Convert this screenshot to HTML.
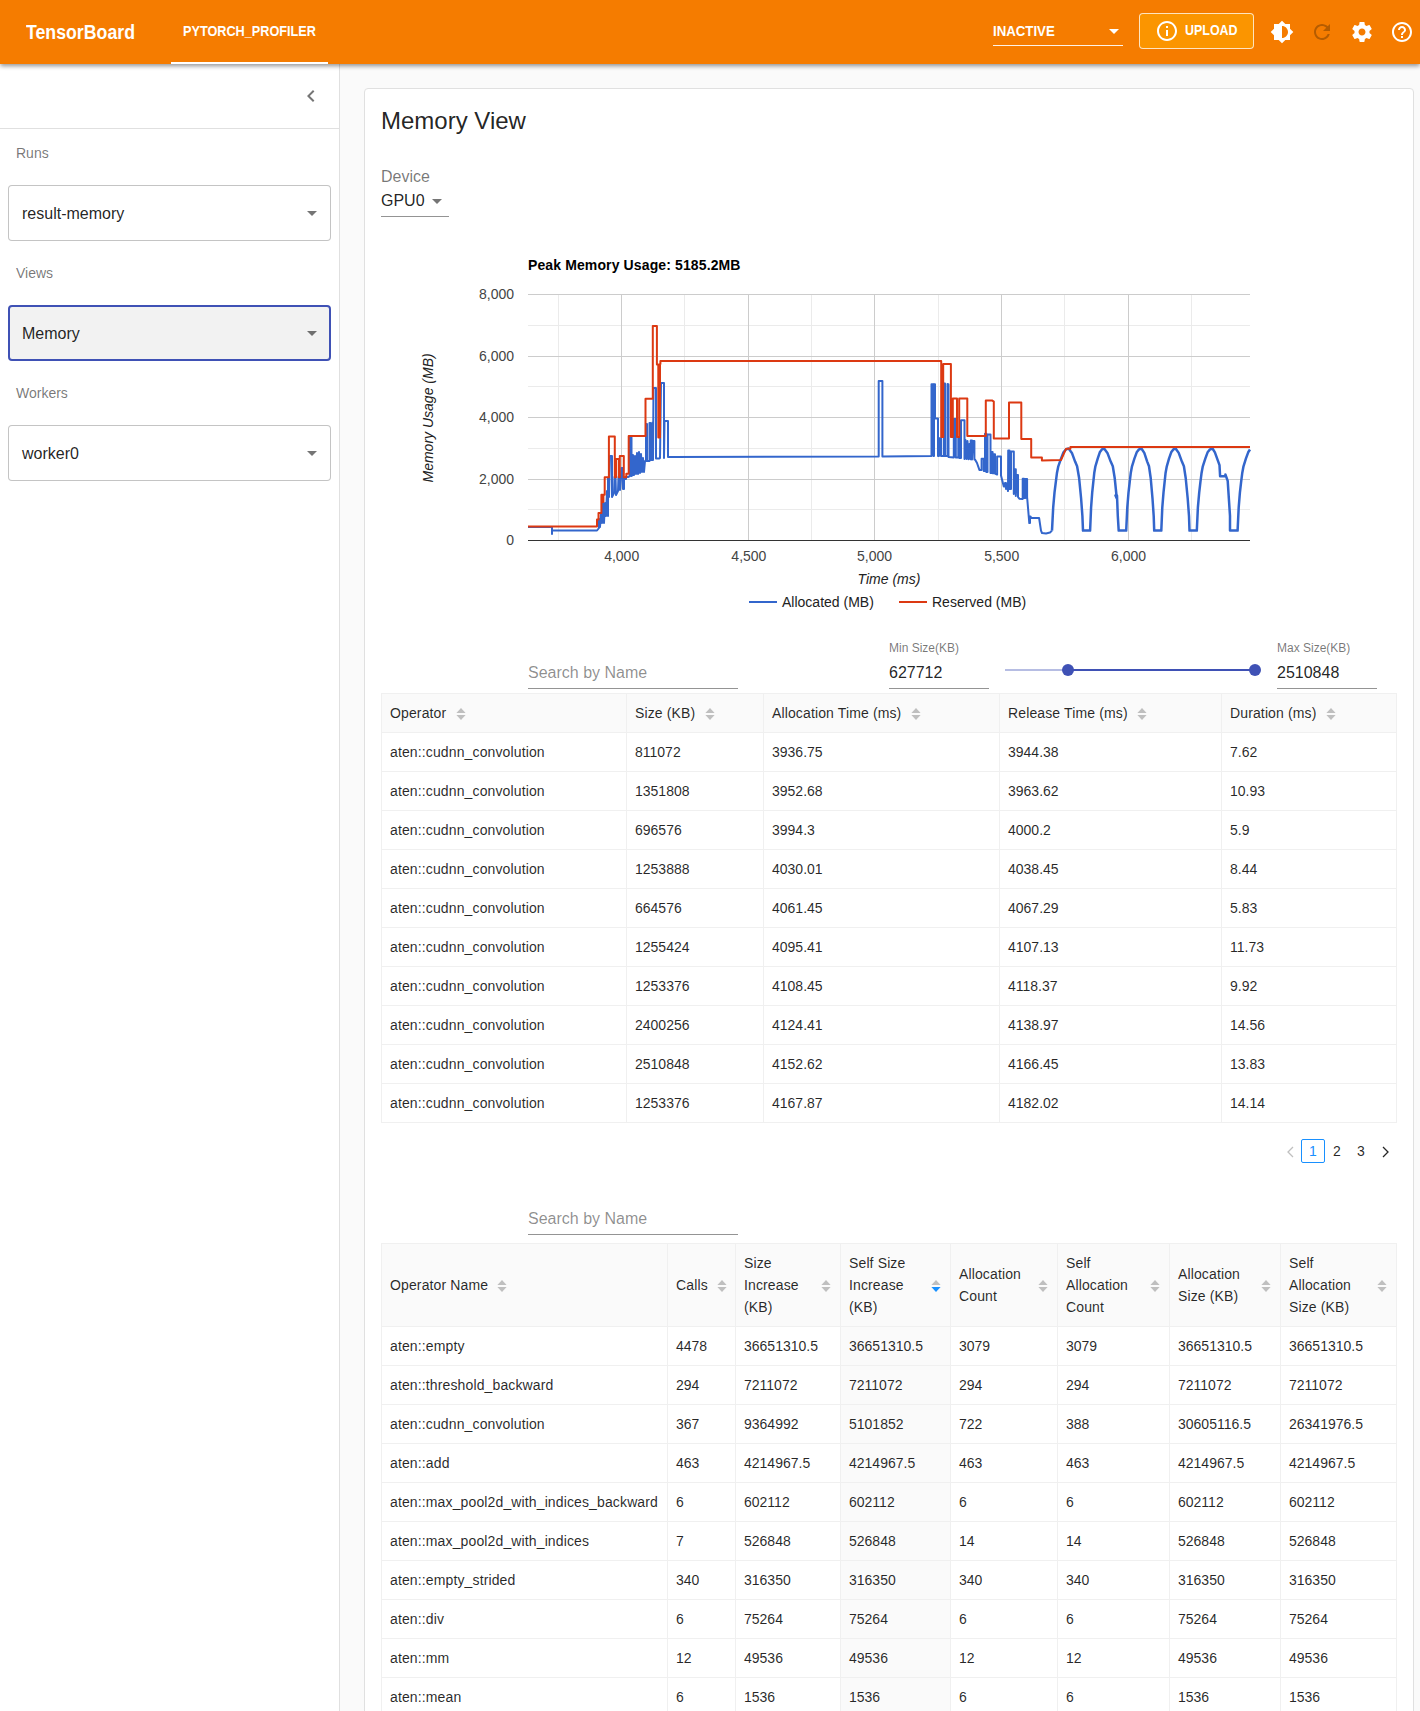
<!DOCTYPE html><html><head><meta charset="utf-8"><style>
*{box-sizing:border-box}
html,body{margin:0;padding:0}
body{width:1420px;height:1711px;overflow:hidden;position:relative;background:#fafafa;font-family:"Liberation Sans",sans-serif}
.t{position:absolute;white-space:nowrap}
.ic{position:absolute;display:block}
.box{position:absolute}
</style></head><body>
<div class="box" style="left:0;top:64px;width:340px;height:1647px;background:#fff;border-right:1px solid #e0e0e0"></div>
<svg class="ic" style="left:299px;top:84px;" width="24" height="24" viewBox="0 0 24 24"><path fill="rgba(0,0,0,.54)" d="M15.41 7.41L14 6l-6 6 6 6 1.41-1.41L10.83 12z"/></svg>
<div class="box" style="left:0;top:128px;width:339px;height:1px;background:#e0e0e0"></div>
<div class="t" style="left:16px;top:144.95px;font-size:14px;line-height:17px;color:rgba(0,0,0,.54);font-weight:normal;">Runs</div>
<div class="box" style="left:8px;top:185px;width:323px;height:56px;border:1px solid rgba(0,0,0,.23);border-radius:4px;background:#fff"></div>
<div class="t" style="left:22px;top:204.36px;font-size:16px;line-height:19px;color:rgba(0,0,0,.87);font-weight:normal;">result-memory</div>
<svg class="ic" style="left:307px;top:211px" width="10" height="5" viewBox="0 0 10 5"><path fill="rgba(0,0,0,.54)" d="M0 0h10L5 5z"/></svg>
<div class="t" style="left:16px;top:264.95px;font-size:14px;line-height:17px;color:rgba(0,0,0,.54);font-weight:normal;">Views</div>
<div class="box" style="left:8px;top:305px;width:323px;height:56px;border:2px solid #3f51b5;border-radius:4px;background:#f2f2f2"></div>
<div class="t" style="left:22px;top:324.36px;font-size:16px;line-height:19px;color:rgba(0,0,0,.87);font-weight:normal;">Memory</div>
<svg class="ic" style="left:307px;top:331px" width="10" height="5" viewBox="0 0 10 5"><path fill="rgba(0,0,0,.54)" d="M0 0h10L5 5z"/></svg>
<div class="t" style="left:16px;top:384.95px;font-size:14px;line-height:17px;color:rgba(0,0,0,.54);font-weight:normal;">Workers</div>
<div class="box" style="left:8px;top:425px;width:323px;height:56px;border:1px solid rgba(0,0,0,.23);border-radius:4px;background:#fff"></div>
<div class="t" style="left:22px;top:444.36px;font-size:16px;line-height:19px;color:rgba(0,0,0,.87);font-weight:normal;">worker0</div>
<svg class="ic" style="left:307px;top:451px" width="10" height="5" viewBox="0 0 10 5"><path fill="rgba(0,0,0,.54)" d="M0 0h10L5 5z"/></svg>
<div class="box" style="left:364px;top:88px;width:1050px;height:1700px;background:#fff;border:1px solid #e0e0e0;border-radius:4px"></div>
<div class="t" style="left:381px;top:105.88px;font-size:24px;line-height:29px;color:rgba(0,0,0,.87);font-weight:normal;">Memory View</div>
<div class="t" style="left:381px;top:166.76px;font-size:16px;line-height:19px;color:rgba(0,0,0,.54);font-weight:normal;">Device</div>
<div class="t" style="left:381px;top:190.76px;font-size:16px;line-height:19px;color:rgba(0,0,0,.87);font-weight:normal;">GPU0</div>
<svg class="ic" style="left:432px;top:199px" width="10" height="5" viewBox="0 0 10 5"><path fill="rgba(0,0,0,.54)" d="M0 0h10L5 5z"/></svg>
<div class="box" style="left:381px;top:216px;width:68px;height:1px;background:rgba(0,0,0,.42)"></div>
<svg class="ic" style="left:0;top:0" width="1420" height="640" viewBox="0 0 1420 640"><rect x="528" y="325" width="722" height="1" fill="#ebebeb"/><rect x="528" y="386" width="722" height="1" fill="#ebebeb"/><rect x="528" y="448" width="722" height="1" fill="#ebebeb"/><rect x="528" y="509" width="722" height="1" fill="#ebebeb"/><rect x="558" y="294" width="1" height="246" fill="#ebebeb"/><rect x="684" y="294" width="1" height="246" fill="#ebebeb"/><rect x="811" y="294" width="1" height="246" fill="#ebebeb"/><rect x="938" y="294" width="1" height="246" fill="#ebebeb"/><rect x="1064" y="294" width="1" height="246" fill="#ebebeb"/><rect x="1191" y="294" width="1" height="246" fill="#ebebeb"/><rect x="528" y="294" width="722" height="1" fill="#cccccc"/><rect x="528" y="356" width="722" height="1" fill="#cccccc"/><rect x="528" y="417" width="722" height="1" fill="#cccccc"/><rect x="528" y="479" width="722" height="1" fill="#cccccc"/><rect x="621" y="294" width="1" height="246" fill="#cccccc"/><rect x="748" y="294" width="1" height="246" fill="#cccccc"/><rect x="874" y="294" width="1" height="246" fill="#cccccc"/><rect x="1001" y="294" width="1" height="246" fill="#cccccc"/><rect x="1128" y="294" width="1" height="246" fill="#cccccc"/><polyline fill="none" stroke="#3366cc" stroke-width="2" stroke-linejoin="round" points="528.0,527.0 552.0,527.0 552.0,534.0 552.0,530.5 597.0,530.5 599.0,528.0 599.0,519.0 600.0,527.0 601.0,513.0 602.0,523.0 603.0,503.0 604.0,523.0 605.0,503.0 606.0,516.0 607.0,491.0 608.0,516.0 608.0,478.0 609.0,478.0 609.0,497.0 610.0,456.0 612.0,456.0 612.0,497.0 614.0,493.0 614.5,477.0 615.5,477.0 616.0,495.0 618.0,491.0 618.5,477.0 619.5,477.0 620.0,490.0 621.5,468.0 622.5,468.0 623.0,489.0 624.0,489.0 624.0,479.0 626.0,479.0 626.0,477.0 628.0,477.0 630.0,476.0 630.0,437.5 631.5,437.5 631.5,476.0 633.0,475.0 633.0,455.0 634.0,475.0 635.0,456.0 636.0,474.0 637.0,453.0 638.0,474.0 639.0,452.0 640.0,473.0 641.0,454.0 642.0,472.0 643.0,458.0 644.0,472.0 645.0,461.0 646.0,461.0 646.0,424.0 647.0,424.0 647.0,461.0 649.5,461.0 649.5,423.0 650.5,423.0 650.5,460.0 652.5,460.0 652.5,422.6 653.0,422.6 653.0,460.0 653.5,388.0 656.0,388.0 656.0,458.5 659.0,458.5 660.0,458.0 661.0,383.0 664.0,383.0 664.0,458.0 664.5,421.0 668.0,421.0 668.0,457.0 670.0,457.0 878.7,456.5 878.7,381.0 882.4,381.0 882.4,456.5 931.5,456.0 931.5,384.3 933.5,384.3 933.5,456.0 934.0,456.0 934.0,384.3 935.0,384.3 935.0,418.5 938.0,418.5 938.0,456.0 939.0,456.0 939.0,438.3 941.0,438.3 941.0,456.0 943.8,456.0 943.8,383.4 945.0,383.4 945.0,456.0 947.5,456.0 947.5,384.0 948.5,384.5 948.5,457.0 953.8,457.5 953.8,419.0 955.8,419.0 955.8,457.5 958.3,457.5 958.3,437.0 959.4,437.0 959.4,458.0 961.0,458.0 961.0,420.2 964.5,420.2 964.5,459.0 965.5,440.0 966.5,459.0 967.5,441.0 968.5,459.3 969.5,444.0 970.5,459.3 970.7,440.5 972.0,440.5 972.0,459.5 973.0,441.0 974.4,441.0 974.4,459.5 975.0,459.5 977.0,463.0 979.4,469.9 981.6,470.0 981.6,458.8 983.8,458.8 983.8,471.0 985.0,471.0 985.0,433.8 986.3,433.8 986.3,472.0 987.5,472.0 987.5,434.5 990.5,434.5 990.5,473.0 991.5,473.0 991.5,452.0 992.6,452.0 992.6,473.2 993.5,473.2 993.5,454.3 995.0,454.3 995.0,473.5 997.1,474.5 997.1,456.5 1001.0,456.5 1001.0,475.4 1003.8,486.5 1005.0,486.5 1005.0,483.0 1006.0,483.0 1006.0,489.0 1007.0,484.0 1008.0,491.0 1008.2,450.4 1009.5,450.4 1009.5,489.0 1011.0,489.0 1011.0,451.5 1013.8,451.5 1013.8,494.0 1014.5,469.3 1015.8,469.3 1015.8,496.0 1017.0,474.9 1018.0,474.9 1018.0,497.0 1019.3,498.7 1022.7,499.0 1022.7,478.7 1024.0,478.7 1024.0,498.0 1025.3,498.0 1025.3,479.0 1027.1,479.0 1027.1,497.0 1029.3,523.1 1030.0,523.1 1030.0,516.5 1030.5,516.5 1031.2,518.0 1039.1,518.0 1041.0,530.6 1042.0,533.0 1046.0,533.4 1050.0,532.5 1052.0,530.6"/><polyline fill="none" stroke="#3366cc" stroke-width="2.5" stroke-linejoin="round" points="1052.0,530.6 1053.2,507.3 1054.5,492.6 1055.8,482.1 1057.0,472.7 1058.3,466.3 1061.0,458.7 1063.5,452.3 1066.0,449.4 1068.6,448.5 1071.9,452.9 1075.1,461.6 1077.1,466.3 1079.1,478.0 1081.1,498.5 1082.4,516.0 1083.0,530.6 1090.1,530.6 1091.1,507.3 1092.2,492.6 1093.3,482.1 1094.3,472.7 1095.4,466.3 1097.7,458.7 1099.8,452.3 1101.9,449.4 1104.1,448.5 1107.4,452.9 1110.7,461.6 1112.8,466.3 1114.7,478.0 1116.8,498.5 1115.5,495.5 1117.0,495.5 1117.8,516.0 1118.7,530.6 1126.2,530.6 1127.3,507.3 1128.5,492.6 1129.7,482.1 1130.8,472.7 1132.0,466.3 1134.4,458.7 1136.7,452.3 1139.0,449.4 1141.4,448.5 1144.3,452.9 1147.2,461.6 1149.0,466.3 1150.7,478.0 1152.5,498.5 1153.7,516.0 1154.2,530.6 1161.3,530.6 1162.3,507.3 1163.5,492.6 1164.6,482.1 1165.6,472.7 1166.8,466.3 1169.0,458.7 1171.2,452.3 1173.3,449.4 1175.6,448.5 1178.7,452.9 1181.9,461.6 1183.9,466.3 1185.7,478.0 1187.7,498.5 1189.0,516.0 1189.5,530.6 1196.8,530.6 1197.9,507.3 1199.2,492.6 1200.4,482.1 1201.6,472.7 1202.8,466.3 1205.3,458.7 1207.6,452.3 1210.0,449.4 1212.5,448.5 1214.9,452.3 1219.5,465.1 1220.1,476.2 1225.4,476.2 1225.4,474.5 1227.7,480.9 1230.0,515.9 1230.0,530.6 1237.6,530.6 1238.7,507.3 1239.9,492.6 1241.1,482.1 1242.3,472.7 1243.5,466.3 1245.9,458.7 1248.2,452.3 1250.0,449.5"/><polyline fill="none" stroke="#dc3912" stroke-width="2" stroke-linejoin="round" points="528.0,526.5 597.0,526.5 597.0,519.5 598.5,519.5 598.5,513.0 601.4,513.0 601.4,494.7 602.4,494.7 602.4,502.0 603.4,502.0 603.4,494.7 604.7,494.7 604.7,477.3 608.9,477.3 608.9,436.6 614.8,436.6 614.8,477.3 616.0,477.3 616.0,458.9 618.8,458.9 618.8,477.3 619.8,477.3 619.8,455.9 623.8,455.9 623.8,477.3 626.3,477.3 626.3,473.8 628.7,473.8 628.7,436.0 645.5,436.0 645.5,398.8 652.8,398.8 652.8,326.0 656.9,326.0 656.9,364.4 658.3,364.4 658.3,437.5 660.0,437.5 660.0,364.0 660.4,364.0 660.4,361.0 941.2,361.0 941.2,437.0 943.2,437.0 943.2,364.0 950.9,364.0 950.9,437.0 952.8,437.0 952.8,398.6 957.0,398.6 957.0,437.0 959.2,437.0 959.2,398.6 967.3,398.6 967.3,436.0 985.8,436.0 985.8,400.4 992.0,400.4 993.8,401.6 993.8,438.6 1009.0,438.6 1009.0,402.4 1021.3,402.4 1021.3,439.0 1031.2,439.0 1031.2,457.5 1041.9,457.5 1041.9,460.6 1061.0,460.0 1066.0,448.8 1070.4,448.8 1070.4,446.9 1250.0,446.9"/><rect x="528" y="540" width="722" height="1" fill="#333333"/><rect x="749" y="601" width="28" height="2" fill="#3366cc"/><rect x="899" y="601" width="28" height="2" fill="#dc3912"/></svg>
<div class="t" style="left:528px;top:256.65px;font-size:14px;line-height:17px;color:#000;font-weight:bold;letter-spacing:0.12px">Peak Memory Usage: 5185.2MB</div>
<div class="t" style="left:414px;top:285.85px;font-size:14px;line-height:17px;color:#444;font-weight:normal;width:100px;text-align:right">8,000</div>
<div class="t" style="left:414px;top:347.65px;font-size:14px;line-height:17px;color:#444;font-weight:normal;width:100px;text-align:right">6,000</div>
<div class="t" style="left:414px;top:409.15px;font-size:14px;line-height:17px;color:#444;font-weight:normal;width:100px;text-align:right">4,000</div>
<div class="t" style="left:414px;top:470.65px;font-size:14px;line-height:17px;color:#444;font-weight:normal;width:100px;text-align:right">2,000</div>
<div class="t" style="left:414px;top:532.15px;font-size:14px;line-height:17px;color:#444;font-weight:normal;width:100px;text-align:right">0</div>
<div class="t" style="left:571.7px;top:548.05px;font-size:14px;line-height:17px;color:#444;font-weight:normal;width:100px;text-align:center">4,000</div>
<div class="t" style="left:698.9px;top:548.05px;font-size:14px;line-height:17px;color:#444;font-weight:normal;width:100px;text-align:center">4,500</div>
<div class="t" style="left:824.6px;top:548.05px;font-size:14px;line-height:17px;color:#444;font-weight:normal;width:100px;text-align:center">5,000</div>
<div class="t" style="left:951.7px;top:548.05px;font-size:14px;line-height:17px;color:#444;font-weight:normal;width:100px;text-align:center">5,500</div>
<div class="t" style="left:1078.5px;top:548.05px;font-size:14px;line-height:17px;color:#444;font-weight:normal;width:100px;text-align:center">6,000</div>
<div class="t" style="left:829px;top:571.05px;font-size:14px;line-height:17px;color:#222;font-weight:normal;width:120px;text-align:center;font-style:italic">Time (ms)</div>
<div class="t" style="left:368.3px;top:414px;width:120px;height:17px;text-align:center;font-size:14px;line-height:17px;color:#222;font-style:italic;transform:rotate(-90deg);transform-origin:60px 8.5px">Memory Usage (MB)</div>
<div class="t" style="left:782px;top:594.15px;font-size:14px;line-height:17px;color:#222;font-weight:normal;">Allocated (MB)</div>
<div class="t" style="left:932px;top:594.15px;font-size:14px;line-height:17px;color:#222;font-weight:normal;">Reserved (MB)</div>
<div class="t" style="left:528px;top:662.96px;font-size:16px;line-height:19px;color:rgba(0,0,0,.45);font-weight:normal;">Search by Name</div>
<div class="box" style="left:528px;top:688px;width:210px;height:1px;background:rgba(0,0,0,.42)"></div>
<div class="t" style="left:889px;top:640.84px;font-size:12px;line-height:14px;color:rgba(0,0,0,.54);font-weight:normal;">Min Size(KB)</div>
<div class="t" style="left:889px;top:662.96px;font-size:16px;line-height:19px;color:rgba(0,0,0,.87);font-weight:normal;">627712</div>
<div class="box" style="left:889px;top:688px;width:100px;height:1px;background:rgba(0,0,0,.42)"></div>
<div class="t" style="left:1277px;top:640.84px;font-size:12px;line-height:14px;color:rgba(0,0,0,.54);font-weight:normal;">Max Size(KB)</div>
<div class="t" style="left:1277px;top:662.96px;font-size:16px;line-height:19px;color:rgba(0,0,0,.87);font-weight:normal;">2510848</div>
<div class="box" style="left:1277px;top:688px;width:100px;height:1px;background:rgba(0,0,0,.42)"></div>
<div class="box" style="left:1005px;top:669px;width:250px;height:2px;background:rgba(63,81,181,.38)"></div>
<div class="box" style="left:1068px;top:669px;width:187px;height:2px;background:#3f51b5"></div>
<div class="box" style="left:1062px;top:664px;width:12px;height:12px;border-radius:6px;background:#3f51b5"></div>
<div class="box" style="left:1249px;top:664px;width:12px;height:12px;border-radius:6px;background:#3f51b5"></div>
<div class="box" style="left:381px;top:693px;width:1016px;height:39px;background:#fafafa"></div>
<div class="box" style="left:381px;top:693px;width:1016px;height:1px;background:#f0f0f0"></div>
<div class="box" style="left:381px;top:732px;width:1016px;height:1px;background:#f0f0f0"></div>
<div class="box" style="left:381px;top:771px;width:1016px;height:1px;background:#f0f0f0"></div>
<div class="box" style="left:381px;top:810px;width:1016px;height:1px;background:#f0f0f0"></div>
<div class="box" style="left:381px;top:849px;width:1016px;height:1px;background:#f0f0f0"></div>
<div class="box" style="left:381px;top:888px;width:1016px;height:1px;background:#f0f0f0"></div>
<div class="box" style="left:381px;top:927px;width:1016px;height:1px;background:#f0f0f0"></div>
<div class="box" style="left:381px;top:966px;width:1016px;height:1px;background:#f0f0f0"></div>
<div class="box" style="left:381px;top:1005px;width:1016px;height:1px;background:#f0f0f0"></div>
<div class="box" style="left:381px;top:1044px;width:1016px;height:1px;background:#f0f0f0"></div>
<div class="box" style="left:381px;top:1083px;width:1016px;height:1px;background:#f0f0f0"></div>
<div class="box" style="left:381px;top:1122px;width:1016px;height:1px;background:#f0f0f0"></div>
<div class="box" style="left:381px;top:693px;width:1px;height:429px;background:#f0f0f0"></div>
<div class="box" style="left:626px;top:693px;width:1px;height:429px;background:#f0f0f0"></div>
<div class="box" style="left:763px;top:693px;width:1px;height:429px;background:#f0f0f0"></div>
<div class="box" style="left:999px;top:693px;width:1px;height:429px;background:#f0f0f0"></div>
<div class="box" style="left:1221px;top:693px;width:1px;height:429px;background:#f0f0f0"></div>
<div class="box" style="left:1396px;top:693px;width:1px;height:429px;background:#f0f0f0"></div>
<div class="t" style="left:390px;top:704.65px;font-size:14px;line-height:17px;color:rgba(0,0,0,.85);font-weight:normal;letter-spacing:0.13px">Operator</div>
<svg class="ic" style="left:455.75875px;top:708px" width="10" height="12" viewBox="0 0 10 12"><path fill="#bfbfbf" d="M0.4 5L5 0 9.6 5z"/><path fill="#bfbfbf" d="M0.4 7L5 12 9.6 7z"/></svg>
<div class="t" style="left:635px;top:704.65px;font-size:14px;line-height:17px;color:rgba(0,0,0,.85);font-weight:normal;letter-spacing:0.13px">Size (KB)</div>
<svg class="ic" style="left:704.795px;top:708px" width="10" height="12" viewBox="0 0 10 12"><path fill="#bfbfbf" d="M0.4 5L5 0 9.6 5z"/><path fill="#bfbfbf" d="M0.4 7L5 12 9.6 7z"/></svg>
<div class="t" style="left:772px;top:704.65px;font-size:14px;line-height:17px;color:rgba(0,0,0,.85);font-weight:normal;letter-spacing:0.13px">Allocation Time (ms)</div>
<svg class="ic" style="left:910.865625px;top:708px" width="10" height="12" viewBox="0 0 10 12"><path fill="#bfbfbf" d="M0.4 5L5 0 9.6 5z"/><path fill="#bfbfbf" d="M0.4 7L5 12 9.6 7z"/></svg>
<div class="t" style="left:1008px;top:704.65px;font-size:14px;line-height:17px;color:rgba(0,0,0,.85);font-weight:normal;letter-spacing:0.13px">Release Time (ms)</div>
<svg class="ic" style="left:1137.131875px;top:708px" width="10" height="12" viewBox="0 0 10 12"><path fill="#bfbfbf" d="M0.4 5L5 0 9.6 5z"/><path fill="#bfbfbf" d="M0.4 7L5 12 9.6 7z"/></svg>
<div class="t" style="left:1230px;top:704.65px;font-size:14px;line-height:17px;color:rgba(0,0,0,.85);font-weight:normal;letter-spacing:0.13px">Duration (ms)</div>
<svg class="ic" style="left:1325.94px;top:708px" width="10" height="12" viewBox="0 0 10 12"><path fill="#bfbfbf" d="M0.4 5L5 0 9.6 5z"/><path fill="#bfbfbf" d="M0.4 7L5 12 9.6 7z"/></svg>
<div class="t" style="left:390px;top:743.85px;font-size:14px;line-height:17px;color:rgba(0,0,0,.85);font-weight:normal;letter-spacing:0.13px">aten::cudnn_convolution</div>
<div class="t" style="left:635px;top:743.85px;font-size:14px;line-height:17px;color:rgba(0,0,0,.85);font-weight:normal;">811072</div>
<div class="t" style="left:772px;top:743.85px;font-size:14px;line-height:17px;color:rgba(0,0,0,.85);font-weight:normal;">3936.75</div>
<div class="t" style="left:1008px;top:743.85px;font-size:14px;line-height:17px;color:rgba(0,0,0,.85);font-weight:normal;">3944.38</div>
<div class="t" style="left:1230px;top:743.85px;font-size:14px;line-height:17px;color:rgba(0,0,0,.85);font-weight:normal;">7.62</div>
<div class="t" style="left:390px;top:782.85px;font-size:14px;line-height:17px;color:rgba(0,0,0,.85);font-weight:normal;letter-spacing:0.13px">aten::cudnn_convolution</div>
<div class="t" style="left:635px;top:782.85px;font-size:14px;line-height:17px;color:rgba(0,0,0,.85);font-weight:normal;">1351808</div>
<div class="t" style="left:772px;top:782.85px;font-size:14px;line-height:17px;color:rgba(0,0,0,.85);font-weight:normal;">3952.68</div>
<div class="t" style="left:1008px;top:782.85px;font-size:14px;line-height:17px;color:rgba(0,0,0,.85);font-weight:normal;">3963.62</div>
<div class="t" style="left:1230px;top:782.85px;font-size:14px;line-height:17px;color:rgba(0,0,0,.85);font-weight:normal;">10.93</div>
<div class="t" style="left:390px;top:821.85px;font-size:14px;line-height:17px;color:rgba(0,0,0,.85);font-weight:normal;letter-spacing:0.13px">aten::cudnn_convolution</div>
<div class="t" style="left:635px;top:821.85px;font-size:14px;line-height:17px;color:rgba(0,0,0,.85);font-weight:normal;">696576</div>
<div class="t" style="left:772px;top:821.85px;font-size:14px;line-height:17px;color:rgba(0,0,0,.85);font-weight:normal;">3994.3</div>
<div class="t" style="left:1008px;top:821.85px;font-size:14px;line-height:17px;color:rgba(0,0,0,.85);font-weight:normal;">4000.2</div>
<div class="t" style="left:1230px;top:821.85px;font-size:14px;line-height:17px;color:rgba(0,0,0,.85);font-weight:normal;">5.9</div>
<div class="t" style="left:390px;top:860.85px;font-size:14px;line-height:17px;color:rgba(0,0,0,.85);font-weight:normal;letter-spacing:0.13px">aten::cudnn_convolution</div>
<div class="t" style="left:635px;top:860.85px;font-size:14px;line-height:17px;color:rgba(0,0,0,.85);font-weight:normal;">1253888</div>
<div class="t" style="left:772px;top:860.85px;font-size:14px;line-height:17px;color:rgba(0,0,0,.85);font-weight:normal;">4030.01</div>
<div class="t" style="left:1008px;top:860.85px;font-size:14px;line-height:17px;color:rgba(0,0,0,.85);font-weight:normal;">4038.45</div>
<div class="t" style="left:1230px;top:860.85px;font-size:14px;line-height:17px;color:rgba(0,0,0,.85);font-weight:normal;">8.44</div>
<div class="t" style="left:390px;top:899.85px;font-size:14px;line-height:17px;color:rgba(0,0,0,.85);font-weight:normal;letter-spacing:0.13px">aten::cudnn_convolution</div>
<div class="t" style="left:635px;top:899.85px;font-size:14px;line-height:17px;color:rgba(0,0,0,.85);font-weight:normal;">664576</div>
<div class="t" style="left:772px;top:899.85px;font-size:14px;line-height:17px;color:rgba(0,0,0,.85);font-weight:normal;">4061.45</div>
<div class="t" style="left:1008px;top:899.85px;font-size:14px;line-height:17px;color:rgba(0,0,0,.85);font-weight:normal;">4067.29</div>
<div class="t" style="left:1230px;top:899.85px;font-size:14px;line-height:17px;color:rgba(0,0,0,.85);font-weight:normal;">5.83</div>
<div class="t" style="left:390px;top:938.85px;font-size:14px;line-height:17px;color:rgba(0,0,0,.85);font-weight:normal;letter-spacing:0.13px">aten::cudnn_convolution</div>
<div class="t" style="left:635px;top:938.85px;font-size:14px;line-height:17px;color:rgba(0,0,0,.85);font-weight:normal;">1255424</div>
<div class="t" style="left:772px;top:938.85px;font-size:14px;line-height:17px;color:rgba(0,0,0,.85);font-weight:normal;">4095.41</div>
<div class="t" style="left:1008px;top:938.85px;font-size:14px;line-height:17px;color:rgba(0,0,0,.85);font-weight:normal;">4107.13</div>
<div class="t" style="left:1230px;top:938.85px;font-size:14px;line-height:17px;color:rgba(0,0,0,.85);font-weight:normal;">11.73</div>
<div class="t" style="left:390px;top:977.85px;font-size:14px;line-height:17px;color:rgba(0,0,0,.85);font-weight:normal;letter-spacing:0.13px">aten::cudnn_convolution</div>
<div class="t" style="left:635px;top:977.85px;font-size:14px;line-height:17px;color:rgba(0,0,0,.85);font-weight:normal;">1253376</div>
<div class="t" style="left:772px;top:977.85px;font-size:14px;line-height:17px;color:rgba(0,0,0,.85);font-weight:normal;">4108.45</div>
<div class="t" style="left:1008px;top:977.85px;font-size:14px;line-height:17px;color:rgba(0,0,0,.85);font-weight:normal;">4118.37</div>
<div class="t" style="left:1230px;top:977.85px;font-size:14px;line-height:17px;color:rgba(0,0,0,.85);font-weight:normal;">9.92</div>
<div class="t" style="left:390px;top:1016.85px;font-size:14px;line-height:17px;color:rgba(0,0,0,.85);font-weight:normal;letter-spacing:0.13px">aten::cudnn_convolution</div>
<div class="t" style="left:635px;top:1016.85px;font-size:14px;line-height:17px;color:rgba(0,0,0,.85);font-weight:normal;">2400256</div>
<div class="t" style="left:772px;top:1016.85px;font-size:14px;line-height:17px;color:rgba(0,0,0,.85);font-weight:normal;">4124.41</div>
<div class="t" style="left:1008px;top:1016.85px;font-size:14px;line-height:17px;color:rgba(0,0,0,.85);font-weight:normal;">4138.97</div>
<div class="t" style="left:1230px;top:1016.85px;font-size:14px;line-height:17px;color:rgba(0,0,0,.85);font-weight:normal;">14.56</div>
<div class="t" style="left:390px;top:1055.85px;font-size:14px;line-height:17px;color:rgba(0,0,0,.85);font-weight:normal;letter-spacing:0.13px">aten::cudnn_convolution</div>
<div class="t" style="left:635px;top:1055.85px;font-size:14px;line-height:17px;color:rgba(0,0,0,.85);font-weight:normal;">2510848</div>
<div class="t" style="left:772px;top:1055.85px;font-size:14px;line-height:17px;color:rgba(0,0,0,.85);font-weight:normal;">4152.62</div>
<div class="t" style="left:1008px;top:1055.85px;font-size:14px;line-height:17px;color:rgba(0,0,0,.85);font-weight:normal;">4166.45</div>
<div class="t" style="left:1230px;top:1055.85px;font-size:14px;line-height:17px;color:rgba(0,0,0,.85);font-weight:normal;">13.83</div>
<div class="t" style="left:390px;top:1094.85px;font-size:14px;line-height:17px;color:rgba(0,0,0,.85);font-weight:normal;letter-spacing:0.13px">aten::cudnn_convolution</div>
<div class="t" style="left:635px;top:1094.85px;font-size:14px;line-height:17px;color:rgba(0,0,0,.85);font-weight:normal;">1253376</div>
<div class="t" style="left:772px;top:1094.85px;font-size:14px;line-height:17px;color:rgba(0,0,0,.85);font-weight:normal;">4167.87</div>
<div class="t" style="left:1008px;top:1094.85px;font-size:14px;line-height:17px;color:rgba(0,0,0,.85);font-weight:normal;">4182.02</div>
<div class="t" style="left:1230px;top:1094.85px;font-size:14px;line-height:17px;color:rgba(0,0,0,.85);font-weight:normal;">14.14</div>
<svg class="ic" style="left:1284.5px;top:1146px" width="10" height="12" viewBox="0 0 10 12"><path fill="none" stroke="rgba(0,0,0,.25)" stroke-width="1.3" d="M8 1L3 6l5 5"/></svg>
<div class="box" style="left:1301px;top:1139px;width:24px;height:24px;border:1px solid #1890ff;border-radius:2px;background:#fff"></div>
<div class="t" style="left:1301px;top:1142px;width:24px;text-align:center;font-size:14px;line-height:18px;color:#1890ff">1</div>
<div class="t" style="left:1325px;top:1142px;width:24px;text-align:center;font-size:14px;line-height:18px;color:rgba(0,0,0,.85)">2</div>
<div class="t" style="left:1349px;top:1142px;width:24px;text-align:center;font-size:14px;line-height:18px;color:rgba(0,0,0,.85)">3</div>
<svg class="ic" style="left:1380.5px;top:1146px" width="10" height="12" viewBox="0 0 10 12"><path fill="none" stroke="rgba(0,0,0,.85)" stroke-width="1.3" d="M2 1l5 5-5 5"/></svg>
<div class="t" style="left:528px;top:1208.96px;font-size:16px;line-height:19px;color:rgba(0,0,0,.45);font-weight:normal;">Search by Name</div>
<div class="box" style="left:528px;top:1234px;width:210px;height:1px;background:rgba(0,0,0,.42)"></div>
<div class="box" style="left:381px;top:1243px;width:1016px;height:83px;background:#fafafa"></div>
<div class="box" style="left:840px;top:1243px;width:110px;height:83px;background:#fafafa"></div>
<div class="box" style="left:840px;top:1326px;width:110px;height:390px;background:#fafafa"></div>
<div class="box" style="left:381px;top:1243px;width:1016px;height:1px;background:#f0f0f0"></div>
<div class="box" style="left:381px;top:1326px;width:1016px;height:1px;background:#f0f0f0"></div>
<div class="box" style="left:381px;top:1365px;width:1016px;height:1px;background:#f0f0f0"></div>
<div class="box" style="left:381px;top:1404px;width:1016px;height:1px;background:#f0f0f0"></div>
<div class="box" style="left:381px;top:1443px;width:1016px;height:1px;background:#f0f0f0"></div>
<div class="box" style="left:381px;top:1482px;width:1016px;height:1px;background:#f0f0f0"></div>
<div class="box" style="left:381px;top:1521px;width:1016px;height:1px;background:#f0f0f0"></div>
<div class="box" style="left:381px;top:1560px;width:1016px;height:1px;background:#f0f0f0"></div>
<div class="box" style="left:381px;top:1599px;width:1016px;height:1px;background:#f0f0f0"></div>
<div class="box" style="left:381px;top:1638px;width:1016px;height:1px;background:#f0f0f0"></div>
<div class="box" style="left:381px;top:1677px;width:1016px;height:1px;background:#f0f0f0"></div>
<div class="box" style="left:381px;top:1716px;width:1016px;height:1px;background:#f0f0f0"></div>
<div class="box" style="left:381px;top:1243px;width:1px;height:473px;background:#f0f0f0"></div>
<div class="box" style="left:667px;top:1243px;width:1px;height:473px;background:#f0f0f0"></div>
<div class="box" style="left:735px;top:1243px;width:1px;height:473px;background:#f0f0f0"></div>
<div class="box" style="left:840px;top:1243px;width:1px;height:473px;background:#f0f0f0"></div>
<div class="box" style="left:950px;top:1243px;width:1px;height:473px;background:#f0f0f0"></div>
<div class="box" style="left:1057px;top:1243px;width:1px;height:473px;background:#f0f0f0"></div>
<div class="box" style="left:1169px;top:1243px;width:1px;height:473px;background:#f0f0f0"></div>
<div class="box" style="left:1280px;top:1243px;width:1px;height:473px;background:#f0f0f0"></div>
<div class="box" style="left:1396px;top:1243px;width:1px;height:473px;background:#f0f0f0"></div>
<div class="t" style="left:390px;top:1277.15px;font-size:14px;line-height:17px;color:rgba(0,0,0,.85);font-weight:normal;letter-spacing:0.13px">Operator Name</div>
<svg class="ic" style="left:497.1275px;top:1280px" width="10" height="12" viewBox="0 0 10 12"><path fill="#bfbfbf" d="M0.4 5L5 0 9.6 5z"/><path fill="#bfbfbf" d="M0.4 7L5 12 9.6 7z"/></svg>
<div class="t" style="left:676px;top:1277.15px;font-size:14px;line-height:17px;color:rgba(0,0,0,.85);font-weight:normal;letter-spacing:0.13px">Calls</div>
<svg class="ic" style="left:716.759375px;top:1280px" width="10" height="12" viewBox="0 0 10 12"><path fill="#bfbfbf" d="M0.4 5L5 0 9.6 5z"/><path fill="#bfbfbf" d="M0.4 7L5 12 9.6 7z"/></svg>
<div class="t" style="left:744px;top:1255.15px;font-size:14px;line-height:17px;color:rgba(0,0,0,.85);font-weight:normal;letter-spacing:0.13px">Size</div>
<div class="t" style="left:744px;top:1277.15px;font-size:14px;line-height:17px;color:rgba(0,0,0,.85);font-weight:normal;letter-spacing:0.13px">Increase</div>
<div class="t" style="left:744px;top:1299.15px;font-size:14px;line-height:17px;color:rgba(0,0,0,.85);font-weight:normal;letter-spacing:0.13px">(KB)</div>
<svg class="ic" style="left:821px;top:1280px" width="10" height="12" viewBox="0 0 10 12"><path fill="#bfbfbf" d="M0.4 5L5 0 9.6 5z"/><path fill="#bfbfbf" d="M0.4 7L5 12 9.6 7z"/></svg>
<div class="t" style="left:849px;top:1255.15px;font-size:14px;line-height:17px;color:rgba(0,0,0,.85);font-weight:normal;letter-spacing:0.13px">Self Size</div>
<div class="t" style="left:849px;top:1277.15px;font-size:14px;line-height:17px;color:rgba(0,0,0,.85);font-weight:normal;letter-spacing:0.13px">Increase</div>
<div class="t" style="left:849px;top:1299.15px;font-size:14px;line-height:17px;color:rgba(0,0,0,.85);font-weight:normal;letter-spacing:0.13px">(KB)</div>
<svg class="ic" style="left:931px;top:1280px" width="10" height="12" viewBox="0 0 10 12"><path fill="#bfbfbf" d="M0.4 5L5 0 9.6 5z"/><path fill="#1890ff" d="M0.4 7L5 12 9.6 7z"/></svg>
<div class="t" style="left:959px;top:1266.15px;font-size:14px;line-height:17px;color:rgba(0,0,0,.85);font-weight:normal;letter-spacing:0.13px">Allocation</div>
<div class="t" style="left:959px;top:1288.15px;font-size:14px;line-height:17px;color:rgba(0,0,0,.85);font-weight:normal;letter-spacing:0.13px">Count</div>
<svg class="ic" style="left:1038px;top:1280px" width="10" height="12" viewBox="0 0 10 12"><path fill="#bfbfbf" d="M0.4 5L5 0 9.6 5z"/><path fill="#bfbfbf" d="M0.4 7L5 12 9.6 7z"/></svg>
<div class="t" style="left:1066px;top:1255.15px;font-size:14px;line-height:17px;color:rgba(0,0,0,.85);font-weight:normal;letter-spacing:0.13px">Self</div>
<div class="t" style="left:1066px;top:1277.15px;font-size:14px;line-height:17px;color:rgba(0,0,0,.85);font-weight:normal;letter-spacing:0.13px">Allocation</div>
<div class="t" style="left:1066px;top:1299.15px;font-size:14px;line-height:17px;color:rgba(0,0,0,.85);font-weight:normal;letter-spacing:0.13px">Count</div>
<svg class="ic" style="left:1150px;top:1280px" width="10" height="12" viewBox="0 0 10 12"><path fill="#bfbfbf" d="M0.4 5L5 0 9.6 5z"/><path fill="#bfbfbf" d="M0.4 7L5 12 9.6 7z"/></svg>
<div class="t" style="left:1178px;top:1266.15px;font-size:14px;line-height:17px;color:rgba(0,0,0,.85);font-weight:normal;letter-spacing:0.13px">Allocation</div>
<div class="t" style="left:1178px;top:1288.15px;font-size:14px;line-height:17px;color:rgba(0,0,0,.85);font-weight:normal;letter-spacing:0.13px">Size (KB)</div>
<svg class="ic" style="left:1261px;top:1280px" width="10" height="12" viewBox="0 0 10 12"><path fill="#bfbfbf" d="M0.4 5L5 0 9.6 5z"/><path fill="#bfbfbf" d="M0.4 7L5 12 9.6 7z"/></svg>
<div class="t" style="left:1289px;top:1255.15px;font-size:14px;line-height:17px;color:rgba(0,0,0,.85);font-weight:normal;letter-spacing:0.13px">Self</div>
<div class="t" style="left:1289px;top:1277.15px;font-size:14px;line-height:17px;color:rgba(0,0,0,.85);font-weight:normal;letter-spacing:0.13px">Allocation</div>
<div class="t" style="left:1289px;top:1299.15px;font-size:14px;line-height:17px;color:rgba(0,0,0,.85);font-weight:normal;letter-spacing:0.13px">Size (KB)</div>
<svg class="ic" style="left:1377px;top:1280px" width="10" height="12" viewBox="0 0 10 12"><path fill="#bfbfbf" d="M0.4 5L5 0 9.6 5z"/><path fill="#bfbfbf" d="M0.4 7L5 12 9.6 7z"/></svg>
<div class="t" style="left:390px;top:1337.85px;font-size:14px;line-height:17px;color:rgba(0,0,0,.85);font-weight:normal;letter-spacing:0.13px">aten::empty</div>
<div class="t" style="left:676px;top:1337.85px;font-size:14px;line-height:17px;color:rgba(0,0,0,.85);font-weight:normal;">4478</div>
<div class="t" style="left:744px;top:1337.85px;font-size:14px;line-height:17px;color:rgba(0,0,0,.85);font-weight:normal;">36651310.5</div>
<div class="t" style="left:849px;top:1337.85px;font-size:14px;line-height:17px;color:rgba(0,0,0,.85);font-weight:normal;">36651310.5</div>
<div class="t" style="left:959px;top:1337.85px;font-size:14px;line-height:17px;color:rgba(0,0,0,.85);font-weight:normal;">3079</div>
<div class="t" style="left:1066px;top:1337.85px;font-size:14px;line-height:17px;color:rgba(0,0,0,.85);font-weight:normal;">3079</div>
<div class="t" style="left:1178px;top:1337.85px;font-size:14px;line-height:17px;color:rgba(0,0,0,.85);font-weight:normal;">36651310.5</div>
<div class="t" style="left:1289px;top:1337.85px;font-size:14px;line-height:17px;color:rgba(0,0,0,.85);font-weight:normal;">36651310.5</div>
<div class="t" style="left:390px;top:1376.85px;font-size:14px;line-height:17px;color:rgba(0,0,0,.85);font-weight:normal;letter-spacing:0.13px">aten::threshold_backward</div>
<div class="t" style="left:676px;top:1376.85px;font-size:14px;line-height:17px;color:rgba(0,0,0,.85);font-weight:normal;">294</div>
<div class="t" style="left:744px;top:1376.85px;font-size:14px;line-height:17px;color:rgba(0,0,0,.85);font-weight:normal;">7211072</div>
<div class="t" style="left:849px;top:1376.85px;font-size:14px;line-height:17px;color:rgba(0,0,0,.85);font-weight:normal;">7211072</div>
<div class="t" style="left:959px;top:1376.85px;font-size:14px;line-height:17px;color:rgba(0,0,0,.85);font-weight:normal;">294</div>
<div class="t" style="left:1066px;top:1376.85px;font-size:14px;line-height:17px;color:rgba(0,0,0,.85);font-weight:normal;">294</div>
<div class="t" style="left:1178px;top:1376.85px;font-size:14px;line-height:17px;color:rgba(0,0,0,.85);font-weight:normal;">7211072</div>
<div class="t" style="left:1289px;top:1376.85px;font-size:14px;line-height:17px;color:rgba(0,0,0,.85);font-weight:normal;">7211072</div>
<div class="t" style="left:390px;top:1415.85px;font-size:14px;line-height:17px;color:rgba(0,0,0,.85);font-weight:normal;letter-spacing:0.13px">aten::cudnn_convolution</div>
<div class="t" style="left:676px;top:1415.85px;font-size:14px;line-height:17px;color:rgba(0,0,0,.85);font-weight:normal;">367</div>
<div class="t" style="left:744px;top:1415.85px;font-size:14px;line-height:17px;color:rgba(0,0,0,.85);font-weight:normal;">9364992</div>
<div class="t" style="left:849px;top:1415.85px;font-size:14px;line-height:17px;color:rgba(0,0,0,.85);font-weight:normal;">5101852</div>
<div class="t" style="left:959px;top:1415.85px;font-size:14px;line-height:17px;color:rgba(0,0,0,.85);font-weight:normal;">722</div>
<div class="t" style="left:1066px;top:1415.85px;font-size:14px;line-height:17px;color:rgba(0,0,0,.85);font-weight:normal;">388</div>
<div class="t" style="left:1178px;top:1415.85px;font-size:14px;line-height:17px;color:rgba(0,0,0,.85);font-weight:normal;">30605116.5</div>
<div class="t" style="left:1289px;top:1415.85px;font-size:14px;line-height:17px;color:rgba(0,0,0,.85);font-weight:normal;">26341976.5</div>
<div class="t" style="left:390px;top:1454.85px;font-size:14px;line-height:17px;color:rgba(0,0,0,.85);font-weight:normal;letter-spacing:0.13px">aten::add</div>
<div class="t" style="left:676px;top:1454.85px;font-size:14px;line-height:17px;color:rgba(0,0,0,.85);font-weight:normal;">463</div>
<div class="t" style="left:744px;top:1454.85px;font-size:14px;line-height:17px;color:rgba(0,0,0,.85);font-weight:normal;">4214967.5</div>
<div class="t" style="left:849px;top:1454.85px;font-size:14px;line-height:17px;color:rgba(0,0,0,.85);font-weight:normal;">4214967.5</div>
<div class="t" style="left:959px;top:1454.85px;font-size:14px;line-height:17px;color:rgba(0,0,0,.85);font-weight:normal;">463</div>
<div class="t" style="left:1066px;top:1454.85px;font-size:14px;line-height:17px;color:rgba(0,0,0,.85);font-weight:normal;">463</div>
<div class="t" style="left:1178px;top:1454.85px;font-size:14px;line-height:17px;color:rgba(0,0,0,.85);font-weight:normal;">4214967.5</div>
<div class="t" style="left:1289px;top:1454.85px;font-size:14px;line-height:17px;color:rgba(0,0,0,.85);font-weight:normal;">4214967.5</div>
<div class="t" style="left:390px;top:1493.85px;font-size:14px;line-height:17px;color:rgba(0,0,0,.85);font-weight:normal;letter-spacing:0.13px">aten::max_pool2d_with_indices_backward</div>
<div class="t" style="left:676px;top:1493.85px;font-size:14px;line-height:17px;color:rgba(0,0,0,.85);font-weight:normal;">6</div>
<div class="t" style="left:744px;top:1493.85px;font-size:14px;line-height:17px;color:rgba(0,0,0,.85);font-weight:normal;">602112</div>
<div class="t" style="left:849px;top:1493.85px;font-size:14px;line-height:17px;color:rgba(0,0,0,.85);font-weight:normal;">602112</div>
<div class="t" style="left:959px;top:1493.85px;font-size:14px;line-height:17px;color:rgba(0,0,0,.85);font-weight:normal;">6</div>
<div class="t" style="left:1066px;top:1493.85px;font-size:14px;line-height:17px;color:rgba(0,0,0,.85);font-weight:normal;">6</div>
<div class="t" style="left:1178px;top:1493.85px;font-size:14px;line-height:17px;color:rgba(0,0,0,.85);font-weight:normal;">602112</div>
<div class="t" style="left:1289px;top:1493.85px;font-size:14px;line-height:17px;color:rgba(0,0,0,.85);font-weight:normal;">602112</div>
<div class="t" style="left:390px;top:1532.85px;font-size:14px;line-height:17px;color:rgba(0,0,0,.85);font-weight:normal;letter-spacing:0.13px">aten::max_pool2d_with_indices</div>
<div class="t" style="left:676px;top:1532.85px;font-size:14px;line-height:17px;color:rgba(0,0,0,.85);font-weight:normal;">7</div>
<div class="t" style="left:744px;top:1532.85px;font-size:14px;line-height:17px;color:rgba(0,0,0,.85);font-weight:normal;">526848</div>
<div class="t" style="left:849px;top:1532.85px;font-size:14px;line-height:17px;color:rgba(0,0,0,.85);font-weight:normal;">526848</div>
<div class="t" style="left:959px;top:1532.85px;font-size:14px;line-height:17px;color:rgba(0,0,0,.85);font-weight:normal;">14</div>
<div class="t" style="left:1066px;top:1532.85px;font-size:14px;line-height:17px;color:rgba(0,0,0,.85);font-weight:normal;">14</div>
<div class="t" style="left:1178px;top:1532.85px;font-size:14px;line-height:17px;color:rgba(0,0,0,.85);font-weight:normal;">526848</div>
<div class="t" style="left:1289px;top:1532.85px;font-size:14px;line-height:17px;color:rgba(0,0,0,.85);font-weight:normal;">526848</div>
<div class="t" style="left:390px;top:1571.85px;font-size:14px;line-height:17px;color:rgba(0,0,0,.85);font-weight:normal;letter-spacing:0.13px">aten::empty_strided</div>
<div class="t" style="left:676px;top:1571.85px;font-size:14px;line-height:17px;color:rgba(0,0,0,.85);font-weight:normal;">340</div>
<div class="t" style="left:744px;top:1571.85px;font-size:14px;line-height:17px;color:rgba(0,0,0,.85);font-weight:normal;">316350</div>
<div class="t" style="left:849px;top:1571.85px;font-size:14px;line-height:17px;color:rgba(0,0,0,.85);font-weight:normal;">316350</div>
<div class="t" style="left:959px;top:1571.85px;font-size:14px;line-height:17px;color:rgba(0,0,0,.85);font-weight:normal;">340</div>
<div class="t" style="left:1066px;top:1571.85px;font-size:14px;line-height:17px;color:rgba(0,0,0,.85);font-weight:normal;">340</div>
<div class="t" style="left:1178px;top:1571.85px;font-size:14px;line-height:17px;color:rgba(0,0,0,.85);font-weight:normal;">316350</div>
<div class="t" style="left:1289px;top:1571.85px;font-size:14px;line-height:17px;color:rgba(0,0,0,.85);font-weight:normal;">316350</div>
<div class="t" style="left:390px;top:1610.85px;font-size:14px;line-height:17px;color:rgba(0,0,0,.85);font-weight:normal;letter-spacing:0.13px">aten::div</div>
<div class="t" style="left:676px;top:1610.85px;font-size:14px;line-height:17px;color:rgba(0,0,0,.85);font-weight:normal;">6</div>
<div class="t" style="left:744px;top:1610.85px;font-size:14px;line-height:17px;color:rgba(0,0,0,.85);font-weight:normal;">75264</div>
<div class="t" style="left:849px;top:1610.85px;font-size:14px;line-height:17px;color:rgba(0,0,0,.85);font-weight:normal;">75264</div>
<div class="t" style="left:959px;top:1610.85px;font-size:14px;line-height:17px;color:rgba(0,0,0,.85);font-weight:normal;">6</div>
<div class="t" style="left:1066px;top:1610.85px;font-size:14px;line-height:17px;color:rgba(0,0,0,.85);font-weight:normal;">6</div>
<div class="t" style="left:1178px;top:1610.85px;font-size:14px;line-height:17px;color:rgba(0,0,0,.85);font-weight:normal;">75264</div>
<div class="t" style="left:1289px;top:1610.85px;font-size:14px;line-height:17px;color:rgba(0,0,0,.85);font-weight:normal;">75264</div>
<div class="t" style="left:390px;top:1649.85px;font-size:14px;line-height:17px;color:rgba(0,0,0,.85);font-weight:normal;letter-spacing:0.13px">aten::mm</div>
<div class="t" style="left:676px;top:1649.85px;font-size:14px;line-height:17px;color:rgba(0,0,0,.85);font-weight:normal;">12</div>
<div class="t" style="left:744px;top:1649.85px;font-size:14px;line-height:17px;color:rgba(0,0,0,.85);font-weight:normal;">49536</div>
<div class="t" style="left:849px;top:1649.85px;font-size:14px;line-height:17px;color:rgba(0,0,0,.85);font-weight:normal;">49536</div>
<div class="t" style="left:959px;top:1649.85px;font-size:14px;line-height:17px;color:rgba(0,0,0,.85);font-weight:normal;">12</div>
<div class="t" style="left:1066px;top:1649.85px;font-size:14px;line-height:17px;color:rgba(0,0,0,.85);font-weight:normal;">12</div>
<div class="t" style="left:1178px;top:1649.85px;font-size:14px;line-height:17px;color:rgba(0,0,0,.85);font-weight:normal;">49536</div>
<div class="t" style="left:1289px;top:1649.85px;font-size:14px;line-height:17px;color:rgba(0,0,0,.85);font-weight:normal;">49536</div>
<div class="t" style="left:390px;top:1688.85px;font-size:14px;line-height:17px;color:rgba(0,0,0,.85);font-weight:normal;letter-spacing:0.13px">aten::mean</div>
<div class="t" style="left:676px;top:1688.85px;font-size:14px;line-height:17px;color:rgba(0,0,0,.85);font-weight:normal;">6</div>
<div class="t" style="left:744px;top:1688.85px;font-size:14px;line-height:17px;color:rgba(0,0,0,.85);font-weight:normal;">1536</div>
<div class="t" style="left:849px;top:1688.85px;font-size:14px;line-height:17px;color:rgba(0,0,0,.85);font-weight:normal;">1536</div>
<div class="t" style="left:959px;top:1688.85px;font-size:14px;line-height:17px;color:rgba(0,0,0,.85);font-weight:normal;">6</div>
<div class="t" style="left:1066px;top:1688.85px;font-size:14px;line-height:17px;color:rgba(0,0,0,.85);font-weight:normal;">6</div>
<div class="t" style="left:1178px;top:1688.85px;font-size:14px;line-height:17px;color:rgba(0,0,0,.85);font-weight:normal;">1536</div>
<div class="t" style="left:1289px;top:1688.85px;font-size:14px;line-height:17px;color:rgba(0,0,0,.85);font-weight:normal;">1536</div>
<div class="box" style="left:0;top:0;width:1420px;height:64px;background:#f57c00;box-shadow:0 2px 4px -1px rgba(0,0,0,.25),0 3px 4px 0 rgba(0,0,0,.16),0 1px 6px 0 rgba(0,0,0,.10)"></div>
<div class="t" style="left:26px;top:19.77px;font-size:20px;line-height:24px;color:#fff;font-weight:bold;transform:scaleX(0.886);transform-origin:0 0">TensorBoard</div>
<div class="t" style="left:183px;top:22.65px;font-size:14px;line-height:17px;color:#fff;font-weight:bold;transform:scaleX(0.906);transform-origin:0 0">PYTORCH_PROFILER</div>
<div class="box" style="left:171px;top:62px;width:157px;height:2px;background:#fff"></div>
<div class="t" style="left:993px;top:22.65px;font-size:14px;line-height:17px;color:#fff;font-weight:bold;transform:scaleX(0.945);transform-origin:0 0">INACTIVE</div>
<div class="box" style="left:993px;top:45px;width:130px;height:1px;background:rgba(255,255,255,.9)"></div>
<svg class="ic" style="left:1109px;top:29px" width="10" height="5" viewBox="0 0 10 5"><path fill="#fff" d="M0 0h10L5 5z"/></svg>
<div class="box" style="left:1139px;top:13px;width:115px;height:36px;border:1px solid rgba(255,255,255,.75);border-radius:4px;background:#fb9500"></div>
<svg class="ic" style="left:1155px;top:19px;" width="24" height="24" viewBox="0 0 24 24"><path fill="#fff" d="M11 7h2v2h-2zm0 4h2v6h-2zm1-9C6.48 2 2 6.48 2 12s4.48 10 10 10 10-4.48 10-10S17.52 2 12 2zm0 18c-4.41 0-8-3.59-8-8s3.59-8 8-8 8 3.59 8 8-3.59 8-8 8z"/></svg>
<div class="t" style="left:1185px;top:21.85px;font-size:14px;line-height:17px;color:#fff;font-weight:bold;transform:scaleX(0.89);transform-origin:0 0">UPLOAD</div>
<svg class="ic" style="left:1270px;top:20px;" width="24" height="24" viewBox="0 0 24 24"><path fill="#fff" d="M20 15.31L23.31 12 20 8.69V4h-4.69L12 .69 8.69 4H4v4.69L.69 12 4 15.31V20h4.69L12 23.31 15.31 20H20v-4.69zM12 18V6c3.31 0 6 2.69 6 6s-2.69 6-6 6z"/></svg>
<svg class="ic" style="left:1310px;top:20px;" width="24" height="24" viewBox="0 0 24 24"><path fill="rgba(0,0,0,.26)" d="M17.65 6.35C16.2 4.9 14.21 4 12 4c-4.42 0-7.99 3.58-7.99 8s3.57 8 7.99 8c3.73 0 6.84-2.55 7.73-6h-2.08c-.82 2.33-3.04 4-5.65 4-3.31 0-6-2.69-6-6s2.69-6 6-6c1.66 0 3.14.69 4.22 1.78L13 11h7V4l-2.35 2.35z"/></svg>
<svg class="ic" style="left:1350px;top:20px;" width="24" height="24" viewBox="0 0 24 24"><path fill="#fff" d="M19.43 12.98c.04-.32.07-.64.07-.98s-.03-.66-.07-.98l2.11-1.65c.19-.15.24-.42.12-.64l-2-3.46c-.12-.22-.39-.3-.61-.22l-2.49 1c-.52-.4-1.08-.73-1.69-.98l-.38-2.65C14.46 2.18 14.25 2 14 2h-4c-.25 0-.46.18-.49.42l-.38 2.65c-.61.25-1.17.59-1.69.98l-2.49-1c-.23-.09-.49 0-.61.22l-2 3.46c-.13.22-.07.49.12.64l2.11 1.65c-.04.32-.07.65-.07.98s.03.66.07.98l-2.11 1.65c-.19.15-.24.42-.12.64l2 3.46c.12.22.39.3.61.22l2.49-1c.52.4 1.08.73 1.69.98l.38 2.65c.03.24.24.42.49.42h4c.25 0 .46-.18.49-.42l.38-2.65c.61-.25 1.17-.59 1.69-.98l2.49 1c.23.09.49 0 .61-.22l2-3.46c.12-.22.07-.49-.12-.64l-2.11-1.65zM12 15.5c-1.93 0-3.5-1.57-3.5-3.5s1.57-3.5 3.5-3.5 3.5 1.57 3.5 3.5-1.57 3.5-3.5 3.5z"/></svg>
<svg class="ic" style="left:1390px;top:20px;" width="24" height="24" viewBox="0 0 24 24"><path fill="#fff" d="M11 18h2v-2h-2v2zm1-16C6.48 2 2 6.48 2 12s4.48 10 10 10 10-4.48 10-10S17.52 2 12 2zm0 18c-4.41 0-8-3.59-8-8s3.59-8 8-8 8 3.59 8 8-3.59 8-8 8zm0-14c-2.21 0-4 1.79-4 4h2c0-1.1.9-2 2-2s2 .9 2 2c0 2-3 1.75-3 5h2c0-2.25 3-2.5 3-5 0-2.21-1.79-4-4-4z"/></svg>
</body></html>
